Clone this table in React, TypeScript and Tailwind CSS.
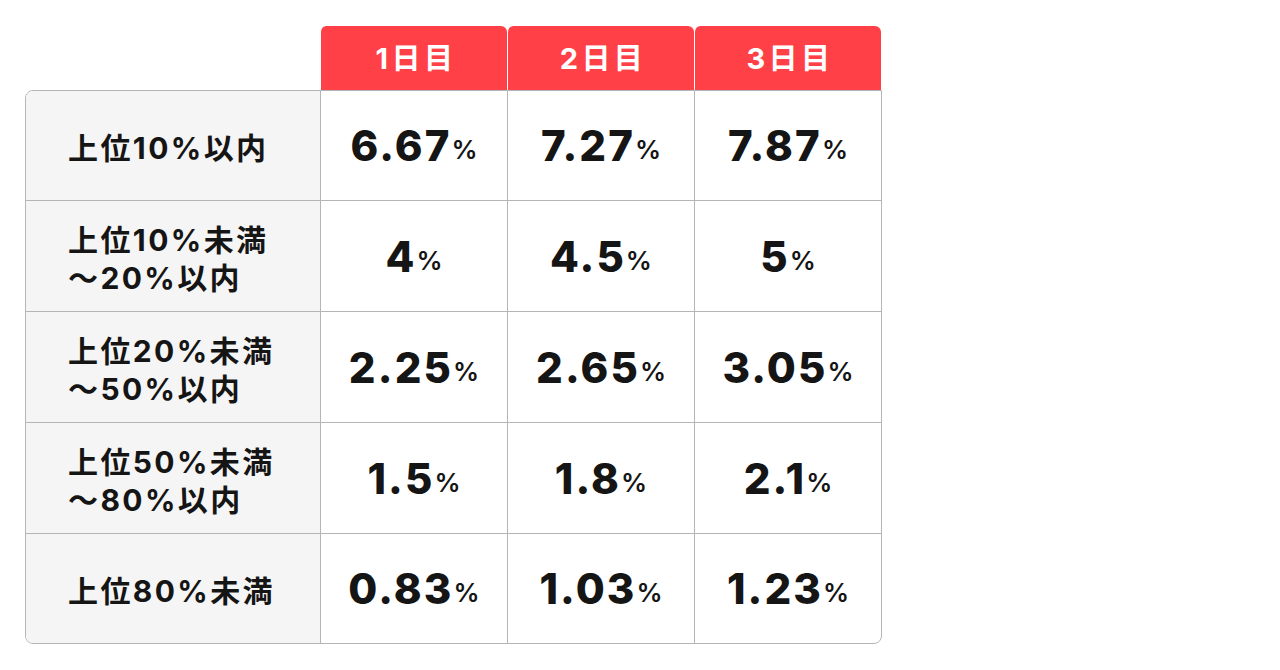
const days = ["1日目", "2日目", "3日目"];

const rows: { label: string[]; values: string[] }[] = [
  { label: ["上位10%以内"], values: ["6.67", "7.27", "7.87"] },
  { label: ["上位10%未満", "〜20%以内"], values: ["4", "4.5", "5"] },
  { label: ["上位20%未満", "〜50%以内"], values: ["2.25", "2.65", "3.05"] },
  { label: ["上位50%未満", "〜80%以内"], values: ["1.5", "1.8", "2.1"] },
  { label: ["上位80%未満"], values: ["0.83", "1.03", "1.23"] },
];

// row heights incl. the top divider so lines land on 200/311/422/533/643
const rowH = ["h-[109px]", "h-[111px]", "h-[111px]", "h-[111px]", "h-[110px]"];

export default function App() {
  return (
    <div className="min-h-screen w-full bg-white pt-[26px] pl-[25px] font-['Inter','Noto_Sans_CJK_JP',sans-serif]">
      <div className="w-[857px]">
        <div className="grid grid-cols-[295px_187px_187px_187px]">
          <div />
          {days.map((d) => (
            <div
              key={d}
              className="flex h-[64px] items-center justify-center rounded-t-[6px] border-l border-white bg-[#ff4047] pt-[2px] pl-[4px] text-[29px] font-bold tracking-[0.12em] text-white"
            >
              {d}
            </div>
          ))}
        </div>
        <div className="overflow-hidden rounded-[8px] rounded-tr-none border border-[#b3b6b9]">
          {rows.map((r, i) => (
            <div
              key={i}
              className={`grid grid-cols-[294px_187px_187px_187px] ${rowH[i]} ${i > 0 ? "border-t border-[#b3b6b9]" : ""}`}
            >
              <div className="flex flex-col justify-center bg-[#f5f5f5] pl-[42px] pt-[5px] text-[30px] font-bold leading-[38px] tracking-[0.08em] text-[#151515]">
                {r.label.map((l) => (
                  <span key={l}>{l}</span>
                ))}
              </div>
              {r.values.map((v) => (
                <div
                  key={v}
                  className="flex items-center justify-center border-l border-[#b3b6b9] text-[#151515]"
                >
                  <span className="text-[42px] font-extrabold tracking-[0.05em]">{v}</span>
                  <span className="mt-[8px] text-[26px] font-semibold">%</span>
                </div>
              ))}
            </div>
          ))}
        </div>
      </div>
    </div>
  );
}
